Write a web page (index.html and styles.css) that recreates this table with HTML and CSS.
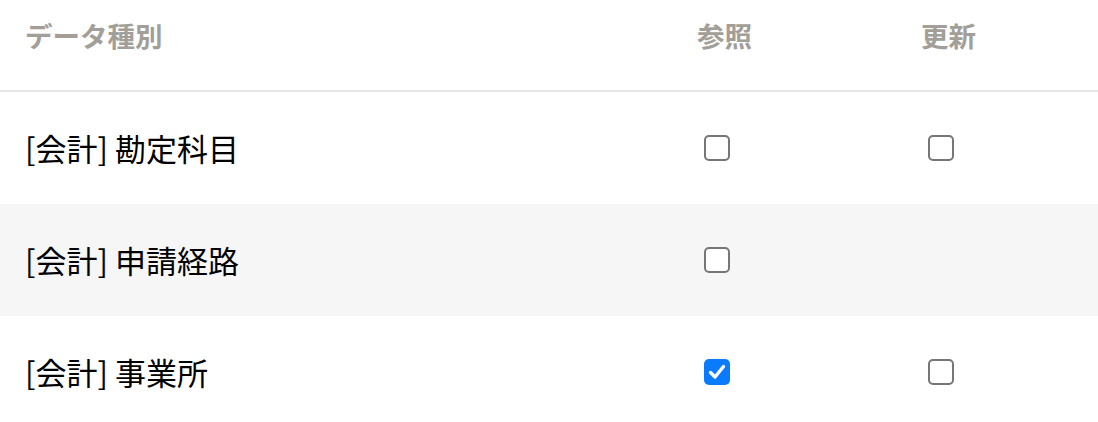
FILE: index.html
```html
<!DOCTYPE html>
<html lang="ja">
<head>
<meta charset="utf-8">
<link rel="stylesheet" href="styles.css">
</head>
<body>
<div class="table">
  <div class="row head">
    <div class="cell name">データ種別</div>
    <div class="cell col">参照</div>
    <div class="cell col">更新</div>
  </div>
  <div class="row">
    <div class="cell name">[会計] 勘定科目</div>
    <div class="cell col"><span class="cb"></span></div>
    <div class="cell col"><span class="cb"></span></div>
  </div>
  <div class="row alt">
    <div class="cell name">[会計] 申請経路</div>
    <div class="cell col"><span class="cb"></span></div>
    <div class="cell col"></div>
  </div>
  <div class="row">
    <div class="cell name">[会計] 事業所</div>
    <div class="cell col"><span class="cb on"><svg viewBox="0 0 26 26" width="26" height="26"><path d="M6.5 13.5 L11 18 L19.5 7.5" fill="none" stroke="#fff" stroke-width="3.4" stroke-linecap="round" stroke-linejoin="round"/></svg></span></div>
    <div class="cell col"><span class="cb"></span></div>
  </div>
</div>
</body>
</html>
```

FILE: styles.css
```css
* { box-sizing: border-box; }
html, body { margin: 0; padding: 0; background: #fff; }
body {
  font-family: "Noto Sans CJK JP", "Noto Sans", sans-serif;
  color: #000;
}
.table { width: 1098px; }
.row {
  display: grid;
  grid-template-columns: 697px 224px 1fr;
  height: 112px;
  align-items: center;
}
.row.alt { background: #f6f6f6; }
.row.head {
  height: 92px;
  border-bottom: 2px solid #e6e6e6;
  align-items: start;
  padding-top: 16px;
  color: #a29e98;
  font-weight: 700;
  font-size: 27.5px;
  line-height: 38px;
}
.cell.name { padding-left: 25px; }
.row:not(.head) .cell.name { font-size: 31px; line-height: 40px; }
.row:not(.head) .col { display: flex; align-items: center; padding-left: 7px; }
.cb {
  display: block;
  width: 26px;
  height: 26px;
  border: 2px solid #767676;
  border-radius: 5px;
  background: #fff;
}
.cb.on {
  border: none;
  background: #0a7aff;
}
.cb svg { display: block; }
```
